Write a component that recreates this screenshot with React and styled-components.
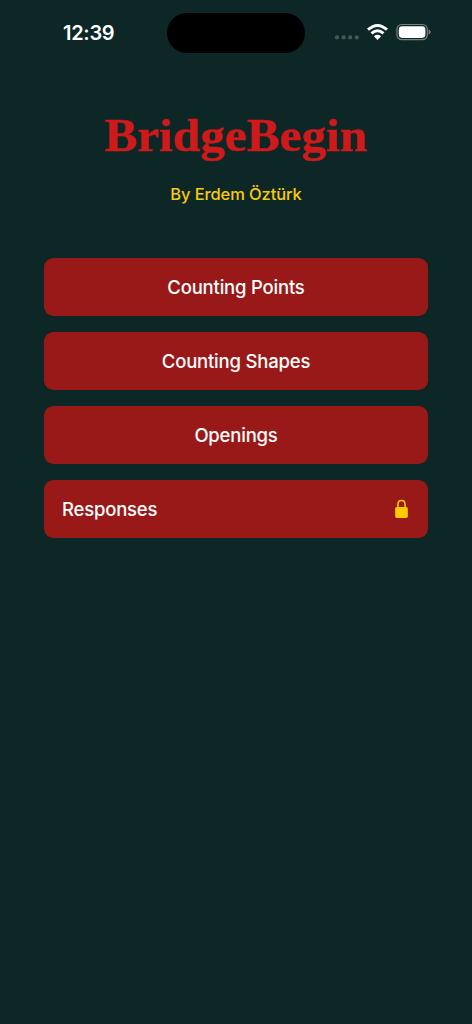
import React from 'react'
import styled, { createGlobalStyle } from 'styled-components'

const GlobalStyle = createGlobalStyle`
*{
    box-sizing: border-box;
}
body{
    margin: 0;
    background-color: #0d2726;
    font-family: "Inter", sans-serif;
}
`
const Screen = styled.div`
min-height: 100vh;
background-color: #0d2726;
display: flex;
flex-direction: column;
overflow: hidden;
`
const StatusBar = styled.header`
height: 66px;
padding: 12.5px 41px 0 63px;
display: grid;
grid-template-columns: 104px 138px 1fr;
align-items: start;
`
const Time = styled.span`
color: white;
font-size: 20px;
font-weight: 600;
line-height: 40px;
letter-spacing: -.3px;
`
const Island = styled.div`
height: 40.5px;
border-radius: 21px;
background-color: black;
`
const StatusIcons = styled.div`
display: flex;
justify-content: flex-end;
padding-top: 10.5px;
svg{
    display: block;
}
`
const Title = styled.h1`
margin: 37px 0 0 0;
text-align: center;
color: #cf1a1b;
font-family: "Liberation Serif", serif;
font-size: 47px;
font-weight: 700;
line-height: 64px;
transform: scaleX(1.048);
-webkit-text-stroke: .5px #cf1a1b;
`
const Author = styled.p`
margin: 15px 0 0 0;
text-align: center;
color: #f9cb0c;
font-size: 16.5px;
font-weight: 550;
line-height: 24px;
letter-spacing: -.1px;
`
const Menu = styled.nav`
margin: 52.3px 44px 0 44px;
display: flex;
flex-direction: column;
gap: 16.3px;
`
const MenuButton = styled.button`
height: 57.6px;
padding: 0 18px;
border: 0;
border-radius: 9.5px;
background-color: #981918;
color: white;
display: flex;
align-items: center;
justify-content: ${({ $locked }) => ($locked ? 'space-between' : 'center')};
font-family: inherit;
font-size: 18.5px;
font-weight: 550;
line-height: 24px;
letter-spacing: -.2px;
cursor: pointer;
svg{
    display: block;
    margin-right: 2px;
}
`

const items = [
    { label: 'Counting Points' },
    { label: 'Counting Shapes' },
    { label: 'Openings' },
    { label: 'Responses', locked: true },
]

// cellular dots, wifi and battery
const Indicators = () => (
    <svg width="97" height="18" viewBox="334 23 97 18">
        <g fill="#455856">
            <circle cx="337" cy="37.4" r="2.1" />
            <circle cx="343.6" cy="37.4" r="2.1" />
            <circle cx="350.2" cy="37.4" r="2.1" />
            <circle cx="356.8" cy="37.4" r="2.1" />
        </g>
        <g fill="none" stroke="white" strokeWidth="2.9">
            <path d="M368 29.7Q377.5 21.2 387 29.7" />
            <path d="M371.5 33.4Q377.5 28.3 383.5 33.4" />
        </g>
        <path d="M377.5 39.9L373.9 36.2Q377.5 33.4 381.1 36.2Z" fill="white" />
        <rect x="396.9" y="24.5" width="30.4" height="15.2" rx="4.8" fill="none" stroke="#77827f" strokeWidth="1.2" />
        <rect x="398.8" y="26.3" width="26.6" height="11.6" rx="3.3" fill="white" />
        <path d="M428.6 29.6Q430.7 30.3 430.7 32.1T428.6 34.6Z" fill="#77827f" />
    </svg>
)

const Lock = () => (
    <svg width="13" height="20" viewBox="0 0 13 20">
        <path d="M2.9 9V5.6C2.9 3.1 4.4 1.5 6.5 1.5S10.1 3.1 10.1 5.6V9" fill="none" stroke="#ffcc00" strokeWidth="1.5" />
        <rect x="0.2" y="7.9" width="12.6" height="11.1" rx="1.7" fill="#ffcc00" />
    </svg>
)

const App = () => {
    return <Screen>
        <GlobalStyle />
        <StatusBar>
            <Time>12:39</Time>
            <Island />
            <StatusIcons><Indicators /></StatusIcons>
        </StatusBar>
        <Title>BridgeBegin</Title>
        <Author>By Erdem Öztürk</Author>
        <Menu>
            {items.map((item) => (
                <MenuButton key={item.label} $locked={item.locked}>
                    {item.label}
                    {item.locked && <Lock />}
                </MenuButton>
            ))}
        </Menu>
    </Screen>
}

export default App
